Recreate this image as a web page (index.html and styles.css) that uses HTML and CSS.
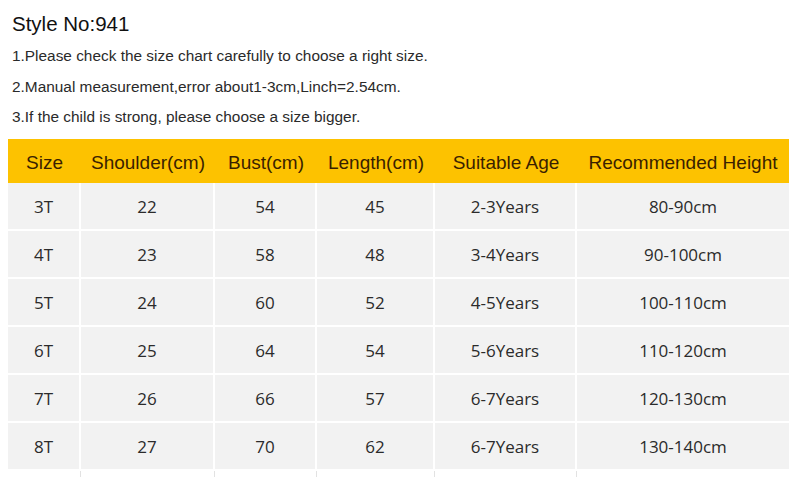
FILE: index.html
```html
<!DOCTYPE html>
<html>
<head>
<meta charset="utf-8">
<link rel="stylesheet" href="styles.css">
</head>
<body>
<div class="notes">
  <h1 class="title">Style No:941</h1>
  <p class="note">1.Please check the size chart carefully to choose a right size.</p>
  <p class="note">2.Manual measurement,error about1-3cm,Linch=2.54cm.</p>
  <p class="note">3.If the child is strong, please choose a size bigger.</p>
</div>
<div class="chart">
  <div class="row head">
    <div class="cell">Size</div>
    <div class="cell">Shoulder(cm)</div>
    <div class="cell">Bust(cm)</div>
    <div class="cell">Length(cm)</div>
    <div class="cell">Suitable Age</div>
    <div class="cell">Recommended Height</div>
  </div>
  <div class="row body">
    <div class="cell">3T</div><div class="cell">22</div><div class="cell">54</div><div class="cell">45</div><div class="cell">2-3Years</div><div class="cell">80-90cm</div>
  </div>
  <div class="row body">
    <div class="cell">4T</div><div class="cell">23</div><div class="cell">58</div><div class="cell">48</div><div class="cell">3-4Years</div><div class="cell">90-100cm</div>
  </div>
  <div class="row body">
    <div class="cell">5T</div><div class="cell">24</div><div class="cell">60</div><div class="cell">52</div><div class="cell">4-5Years</div><div class="cell">100-110cm</div>
  </div>
  <div class="row body">
    <div class="cell">6T</div><div class="cell">25</div><div class="cell">64</div><div class="cell">54</div><div class="cell">5-6Years</div><div class="cell">110-120cm</div>
  </div>
  <div class="row body">
    <div class="cell">7T</div><div class="cell">26</div><div class="cell">66</div><div class="cell">57</div><div class="cell">6-7Years</div><div class="cell">120-130cm</div>
  </div>
  <div class="row body">
    <div class="cell">8T</div><div class="cell">27</div><div class="cell">70</div><div class="cell">62</div><div class="cell">6-7Years</div><div class="cell">130-140cm</div>
  </div>
  <div class="row tail">
    <div class="cell"></div><div class="cell"></div><div class="cell"></div><div class="cell"></div><div class="cell"></div><div class="cell"></div>
  </div>
</div>
</body>
</html>
```
FILE: styles.css
```css
html, body {
  margin: 0;
  padding: 0;
  background: #ffffff;
}
body {
  width: 794px;
  height: 477px;
  overflow: hidden;
  font-family: "Liberation Sans", Arial, sans-serif;
}
.notes {
  padding: 10px 0 0 12px;
  height: 129px;
  box-sizing: border-box;
}
.title {
  margin: 0;
  font-size: 20.5px;
  font-weight: normal;
  color: #111;
  line-height: 28px;
}
.note {
  margin: 0;
  font-size: 15.4px;
  color: #2a2a2a;
  line-height: 30.5px;
}
.note:first-of-type {
  margin-top: 3px;
}
.chart {
  margin: 10px 0 0 8px;
  width: 781px;
}
.row {
  display: grid;
  grid-template-columns: 73px 134px 102px 118px 142px 212px;
}
.cell {
  display: flex;
  align-items: center;
  justify-content: center;
  box-sizing: border-box;
}
.head {
  height: 44px;
  background: #fdc200;
}
.head .cell {
  font-family: "Liberation Sans", Arial, sans-serif;
  font-size: 19px;
  color: #3a1f00;
  padding-top: 3px;
}
.body {
  height: 48px;
}
.body .cell {
  background: #f2f2f2;
  border-bottom: 2px solid #ffffff;
  border-right: 2px solid #ffffff;
  font-family: "Open Sans", "Noto Sans", sans-serif;
  font-size: 17px;
  color: #2b2b2b;
  padding-top: 1px;
}
.body .cell:last-child {
  border-right: none;
}
.tail {
  height: 8px;
}
.tail .cell {
  border-right: 1px solid #e2e2e2;
}
.tail .cell:last-child {
  border-right: none;
}
```
